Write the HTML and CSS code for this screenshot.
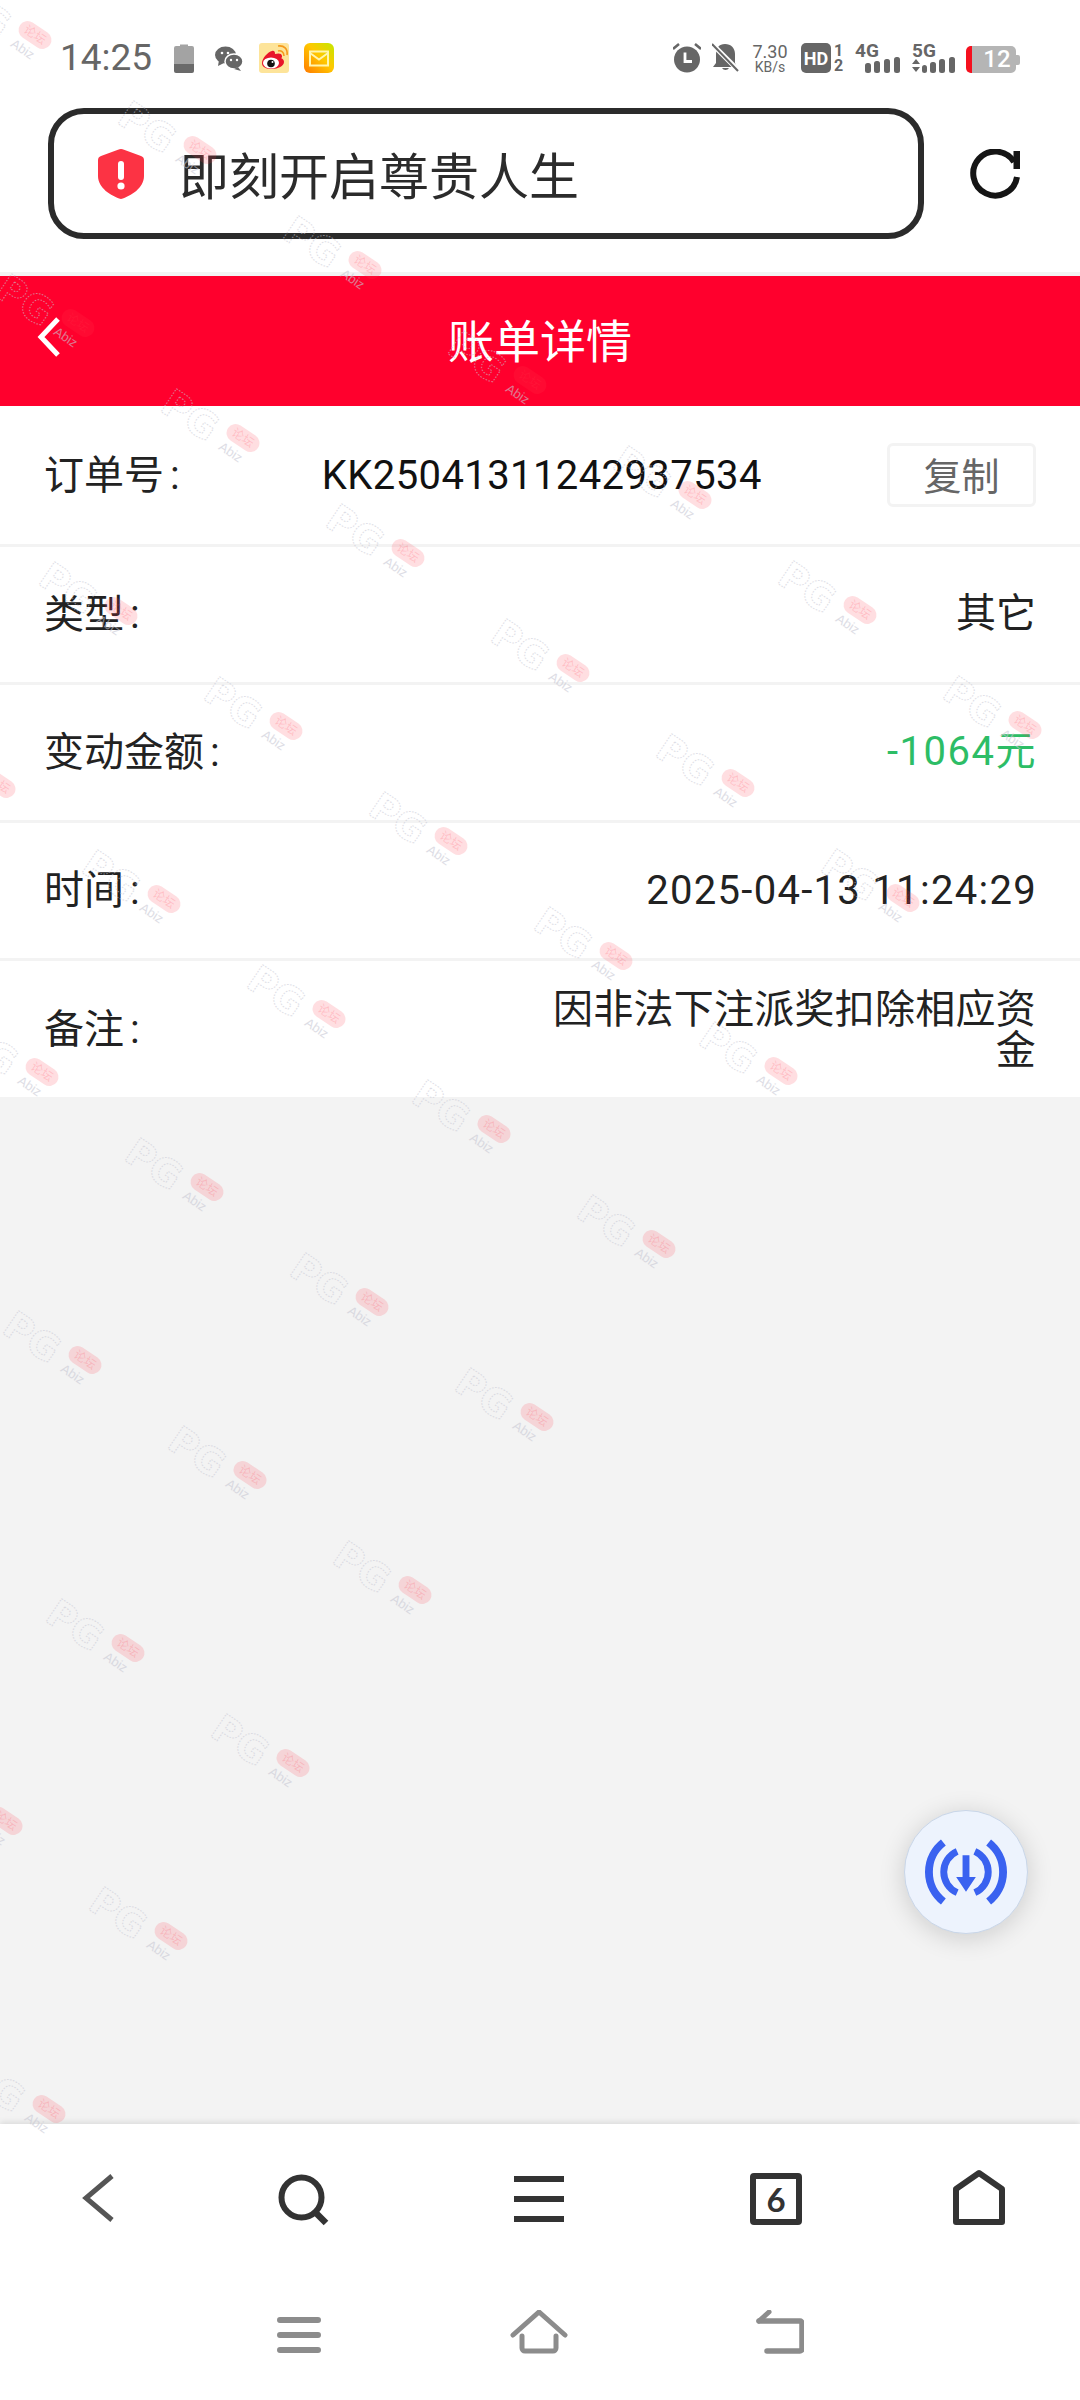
FILE: index.html
```html
<!DOCTYPE html>
<html lang="zh-CN">
<head>
    <meta charset="UTF-8">
    <meta name="viewport" content="width=device-width, initial-scale=1.0">
    <title>账单详情</title>
    <link rel="stylesheet" href="styles.css">
</head>
<body>
    <div class="page">
        <div class="status-bar">
            <div class="status-left">
                <span class="status-time">14:25</span>
                <svg class="ic-batt-small" viewBox="0 0 20 30"><path d="M6 1.500h8v1.500h4a2 2 0 0 1 2 2V21H0V5a2 2 0 0 1 2-2h4z" fill="#a3a3a3"/><path d="M0 21h20v7a2 2 0 0 1-2 2H2a2 2 0 0 1-2-2z" fill="#6a6a6a"/></svg>
                <svg class="ic-wechat" viewBox="0 0 28 25"><ellipse cx="10.500" cy="9" rx="10.500" ry="8.500" fill="#666"/><path d="M4 14l-1 6 6-3z" fill="#666"/><ellipse cx="19" cy="15.500" rx="9" ry="7.500" fill="#666" stroke="#fff" stroke-width="1.500"/><path d="M23 21l3 4-7-2z" fill="#666"/><circle cx="7" cy="7" r="1.300" fill="#fff"/><circle cx="13" cy="7" r="1.300" fill="#fff"/><circle cx="16" cy="14" r="1.200" fill="#fff"/><circle cx="22" cy="14" r="1.200" fill="#fff"/></svg>
                <svg class="ic-app" viewBox="0 0 30 30"><rect width="30" height="30" rx="3" fill="#fde49a"/><path d="M3 20c0-5 6-11 10-12 3-1 3 2 3 3 3-1 7-1 7 2 0 1 0 2-1 2 2 1 3 2 3 4 0 4-6 7-12 7S3 24 3 20z" fill="#e8142a"/><ellipse cx="12" cy="20" rx="8" ry="5.500" fill="#fff"/><circle cx="12" cy="20.500" r="3.800" fill="#111"/><circle cx="13.500" cy="19" r="1" fill="#fff"/><path d="M19 8c3-1 6 1 6 5M19 3c6-1 10 3 9 9" fill="none" stroke="#f59a1c" stroke-width="1.600"/></svg>
                <svg class="ic-app" viewBox="0 0 30 30"><defs><linearGradient id="mailBg" x1="1" y1="0" x2="0" y2="1"><stop offset="0" stop-color="#c3e800"/><stop offset=".45" stop-color="#ffc800"/><stop offset="1" stop-color="#ff7a00"/></linearGradient></defs><rect width="30" height="30" rx="6" fill="url(#mailBg)"/><rect x="6" y="8.500" width="18" height="14" fill="none" stroke="#fff6b0" stroke-width="2"/><path d="M6 10l9 6.500 9-6.500" fill="none" stroke="#fff6b0" stroke-width="2"/></svg>
            </div>
            <div class="status-right">
                <svg class="ic-alarm" viewBox="0 0 28 30"><circle cx="14" cy="16.500" r="13" fill="#666"/><path d="M0 6l6-5M28 6l-6-5" stroke="#666" stroke-width="2.500"/><path d="M12 9.500v9h7" fill="none" stroke="#fff" stroke-width="2.800"/></svg>
                <svg class="ic-bell" viewBox="0 0 27 30"><path d="M13 1c-6 0-9 4-9 10v9l-3 4h24l-2-4V11c0-6-4-10-10-10z" fill="#666"/><path d="M10 25a4 4 0 0 0 7 0z" fill="#666"/><path d="M-1 0l27 27" stroke="#fff" stroke-width="5"/><path d="M0 1l26 27" stroke="#666" stroke-width="2"/></svg>
                <div class="net-speed"><span class="net-val">7.30</span><span class="net-unit">KB/s</span></div>
                <div class="ic-stack">
                    <svg class="ic-hd" viewBox="0 0 30 30"><rect width="30" height="30" rx="5" fill="#666"/><text class="svg-bold" x="15" y="21.500" font-size="18" fill="#fff" text-anchor="middle">HD</text></svg>
                    <div class="sim-nums"><span>1</span><span>2</span></div>
                </div>
                <div class="ic-net ic-net4">
                    <span class="net-name">4G</span>
                    <svg class="net-bars" viewBox="0 0 44 16"><rect x="9" y="6" width="6" height="10" rx="2.500" fill="#666"/><rect x="18" y="4" width="6" height="12" rx="2.500" fill="#666"/><rect x="28" y="2" width="6" height="14" rx="2.500" fill="#666"/><rect x="38" y="0" width="6" height="16" rx="2.500" fill="#666"/></svg>
                </div>
                <div class="ic-net ic-net5">
                    <span class="net-name">5G</span>
                    <svg class="net-bars" viewBox="0 0 43 16"><path d="M0 7l4-5 4 5zM0 10h8l-4 5z" fill="#666"/><rect x="10" y="8" width="5" height="8" rx="2.500" fill="#666"/><rect x="18" y="5" width="6" height="11" rx="2.500" fill="#666"/><rect x="27" y="2" width="6" height="14" rx="2.500" fill="#666"/><rect x="37" y="0" width="6" height="16" rx="2.500" fill="#666"/></svg>
                </div>
                <div class="ic-batt">
                    <span class="batt-level">12</span>
                    <span class="batt-tip"></span>
                </div>
            </div>
        </div>

        <div class="url-row">
            <div class="url-box">
                <svg class="ic-shield" viewBox="0 0 46 50"><path d="M23 0c1 0 2 .3 3 .7l17 6.300c2 .8 3 2 3 4V27c0 12-13 20-23 23C13 47 0 39 0 27V11c0-2 1-3.200 3-4L20 .7c1-.4 2-.7 3-.7z" fill="#fc3344"/><rect x="20" y="12" width="6" height="19" rx="3" fill="#fff"/><circle cx="23" cy="37" r="3.600" fill="#fff"/></svg>
                <span class="url-text">即刻开启尊贵人生</span>
            </div>
            <svg class="ic-refresh" viewBox="0 0 50 50"><path d="M47 28A22 22 0 1 1 44 13" fill="none" stroke="#151515" stroke-width="6"/><rect x="43.500" y="2" width="6.500" height="18" fill="#151515"/></svg>
        </div>

        <header class="title-bar">
            <svg class="ic-title-back" viewBox="0 0 24 40"><path d="M21 2L4 20l17 18" fill="none" stroke="#fff" stroke-width="5"/></svg>
            <h1 class="title-text">账单详情</h1>
        </header>

        <section class="detail-list">
            <div class="detail-row order-row">
                <span class="detail-label">订单号 :</span>
                <span class="detail-value order-no">KK25041311242937534</span>
                <button class="copy-btn">复制</button>
            </div>
            <div class="detail-row">
                <span class="detail-label">类型 :</span>
                <span class="detail-value raised">其它</span>
            </div>
            <div class="detail-row">
                <span class="detail-label">变动金额 :</span>
                <span class="detail-value raised amount">-1064元</span>
            </div>
            <div class="detail-row">
                <span class="detail-label">时间 :</span>
                <span class="detail-value date">2025-04-13 11:24:29</span>
            </div>
            <div class="detail-row">
                <span class="detail-label">备注 :</span>
                <span class="detail-value remark">因非法下注派奖扣除相应资金</span>
            </div>
        </section>

        <div class="page-fill"></div>

        <nav class="browser-nav">
            <svg class="nav-ic nav-back" viewBox="0 0 60 60"><path d="M43 8L17 30l26 22" fill="none" stroke="#555" stroke-width="5"/></svg>
            <svg class="nav-ic nav-search" viewBox="0 0 60 60"><circle cx="28.500" cy="29.500" r="20" fill="none" stroke="#333" stroke-width="6"/><path d="M42 44l11 11" stroke="#333" stroke-width="6.500"/></svg>
            <svg class="nav-ic nav-menu" viewBox="0 0 60 60"><path d="M5 11h50M5 31h50M5 51h50" stroke="#333" stroke-width="6"/></svg>
            <div class="tab-count">6</div>
            <svg class="nav-ic" viewBox="0 0 60 60"><path d="M30 5L7 21v33h46V21z" fill="none" stroke="#333" stroke-width="6" stroke-linejoin="round"/></svg>
        </nav>

        <nav class="system-nav">
            <svg class="sys-ic sys-menu" viewBox="0 0 44 36"><path d="M3 3h38M3 18h38M3 33h38" stroke="#8c8c8c" stroke-width="6" stroke-linecap="round"/></svg>
            <svg class="sys-ic sys-home" viewBox="0 0 58 44"><path d="M3 25L29 2l26 23" fill="none" stroke="#8c8c8c" stroke-width="5" stroke-linecap="round"/><path d="M12 26v12a3 3 0 0 0 3 3h28a3 3 0 0 0 3-3V26" fill="none" stroke="#8c8c8c" stroke-width="5" stroke-linecap="round"/></svg>
            <svg class="sys-ic sys-back" viewBox="0 0 48 44"><path d="M11 41h33a2 2 0 0 0 2-2V13a2 2 0 0 0-2-2H3" fill="none" stroke="#8c8c8c" stroke-width="5.500" stroke-linecap="round"/><path d="M3 11l10-9" stroke="#8c8c8c" stroke-width="5" stroke-linecap="round"/></svg>
        </nav>

        <div class="float-btn">
            <svg class="ic-float" viewBox="0 0 124 124">
                <path d="M39 32A38 38 0 0 0 39 92M85 32A38 38 0 0 1 85 92" fill="none" stroke="#3a62f0" stroke-width="8"/>
                <path d="M53 41A23 23 0 0 0 53 83M71 41A23 23 0 0 1 71 83" fill="none" stroke="#3a62f0" stroke-width="7"/>
                <path d="M58.500 45h7v22h6.500L62 82 52 67h6.500z" fill="#3a62f0"/>
            </svg>
        </div>

        <!-- forum watermark laid over the whole screen -->
        <svg class="watermark" viewBox="0 0 1080 2400">
            <defs>
                <g id="wm" transform="rotate(34)">
                    <text class="wm-letters" x="-86" y="24">PG</text>
                    <rect x="-18" y="-9" width="36" height="18" rx="9" fill="#ff3b50" fill-opacity=".17"/>
                    <text class="wm-tag" x="0" y="4">论坛</text>
                    <text class="wm-small" x="-15" y="23">Abiz</text>
                </g>
            </defs>
            <use href="#wm" x="35" y="35"/><use href="#wm" x="200" y="150"/><use href="#wm" x="365" y="265"/><use href="#wm" x="530" y="380"/><use href="#wm" x="695" y="495"/><use href="#wm" x="860" y="610"/><use href="#wm" x="1025" y="725"/>
            <use href="#wm" x="78" y="323"/><use href="#wm" x="243" y="438"/><use href="#wm" x="408" y="553"/><use href="#wm" x="573" y="668"/><use href="#wm" x="738" y="783"/><use href="#wm" x="903" y="898"/>
            <use href="#wm" x="121" y="611"/><use href="#wm" x="286" y="726"/><use href="#wm" x="451" y="841"/><use href="#wm" x="616" y="956"/><use href="#wm" x="781" y="1071"/>
            <use href="#wm" x="-1" y="784"/><use href="#wm" x="164" y="899"/><use href="#wm" x="329" y="1014"/><use href="#wm" x="494" y="1129"/><use href="#wm" x="659" y="1244"/>
            <use href="#wm" x="42" y="1072"/><use href="#wm" x="207" y="1187"/><use href="#wm" x="372" y="1302"/><use href="#wm" x="537" y="1417"/>
            <use href="#wm" x="85" y="1360"/><use href="#wm" x="250" y="1475"/><use href="#wm" x="415" y="1590"/>
            <use href="#wm" x="128" y="1648"/><use href="#wm" x="293" y="1763"/>
            <use href="#wm" x="6" y="1821"/><use href="#wm" x="171" y="1936"/>
            <use href="#wm" x="49" y="2109"/>
        </svg>
    </div>
</body>
</html>
```

FILE: styles.css
```css
/* Reset and Base Styles */
* {
    margin: 0;
    padding: 0;
    box-sizing: border-box;
    font-family: Roboto, 'Noto Sans CJK SC', sans-serif;
}

body {
    background-color: #fff;
    color: #222;
}

.page {
    position: relative;
    width: 1080px;
    height: 2400px;
    display: flex;
    flex-direction: column;
    overflow: hidden;
    background-color: #f3f3f3;
}

/* Status Bar */
.status-bar {
    height: 108px;
    padding: 43px 60px 0;
    display: flex;
    justify-content: space-between;
    align-items: flex-start;
    background-color: #fff;
}

.status-left,
.status-right {
    display: flex;
    align-items: flex-start;
}

.status-right {
    gap: 11px;
}

.status-time {
    font-size: 37px;
    line-height: 30px;
    color: #666;
    width: 114px;
}

.svg-bold {
    font-weight: 700;
}

.ic-batt-small {
    width: 20px;
    height: 30px;
    margin-right: 21px;
}

.ic-wechat {
    width: 28px;
    height: 25px;
    margin-top: 3px;
    margin-right: 16px;
}

.ic-app {
    width: 30px;
    height: 30px;
    margin-right: 15px;
}

.ic-alarm {
    width: 28px;
    height: 30px;
}

.ic-bell {
    width: 27px;
    height: 30px;
}

.net-speed {
    width: 40px;
    height: 30px;
    display: flex;
    flex-direction: column;
    align-items: center;
    color: #666;
}

.net-val {
    font-size: 18px;
    line-height: 17px;
}

.net-unit {
    font-size: 14px;
    line-height: 14px;
}

.ic-stack {
    width: 43px;
    height: 30px;
    display: flex;
    justify-content: space-between;
}

.ic-hd {
    width: 30px;
    height: 30px;
}

.sim-nums {
    width: 11px;
    display: flex;
    flex-direction: column;
    align-items: center;
    font-size: 16px;
    line-height: 15px;
    font-weight: 700;
    color: #666;
}

.ic-net {
    position: relative;
    height: 30px;
}

.ic-net4 {
    width: 46px;
}

.ic-net5 {
    width: 43px;
}

.net-name {
    display: block;
    font-size: 19px;
    line-height: 15px;
    font-weight: 700;
    color: #666;
}

.net-bars {
    position: absolute;
    left: 0;
    bottom: 0;
    width: 100%;
    height: 16px;
}

.ic-batt {
    position: relative;
    width: 50px;
    height: 27px;
    margin-top: 3px;
    margin-right: 4px;
    display: flex;
    align-items: center;
    justify-content: center;
    padding-left: 6px;
    border-radius: 5px;
    border-left: 6px solid #f5101e;
    background-color: #b5b5b5;
}

.batt-level {
    font-size: 24px;
    line-height: 27px;
    font-weight: 500;
    color: #fff;
}

.batt-tip {
    position: absolute;
    right: -4px;
    top: 9px;
    width: 4px;
    height: 10px;
    border-radius: 0 2px 2px 0;
    background-color: #b5b5b5;
}

/* URL Row */
.url-row {
    height: 168px;
    padding: 0 60px 0 48px;
    display: flex;
    justify-content: space-between;
    align-items: flex-start;
    background-color: #fff;
    border-bottom: 4px solid #f3f3f3;
}

.url-box {
    width: 876px;
    height: 131px;
    padding-left: 44px;
    display: flex;
    align-items: center;
    gap: 35px;
    border: 6px solid #2b2b2b;
    border-radius: 36px;
}

.ic-shield {
    width: 46px;
    height: 50px;
}

.url-text {
    font-size: 50px;
    color: #2b2b2b;
    padding-bottom: 2px;
}

.ic-refresh {
    width: 50px;
    height: 50px;
    margin-top: 41px;
}

/* Title Bar */
.title-bar {
    position: relative;
    height: 130px;
    padding-bottom: 7px;
    display: flex;
    align-items: center;
    justify-content: center;
    background-color: #ff002d;
}

.ic-title-back {
    position: absolute;
    left: 37px;
    top: 41px;
    width: 24px;
    height: 40px;
}

.title-text {
    font-size: 46px;
    font-weight: 400;
    color: #fff;
}

/* Detail Rows */
.detail-list {
    background-color: #fff;
}

.detail-row {
    height: 138px;
    padding: 0 44px;
    display: flex;
    justify-content: space-between;
    align-items: center;
    border-bottom: 3px solid #f3f3f3;
    font-size: 40px;
}

.order-row {
    height: 141px;
}

.detail-row:last-child {
    height: 136px;
    border-bottom: none;
}

.detail-label {
    color: #222;
    word-spacing: -4px;
    padding-bottom: 7px;
}

.detail-value {
    color: #222;
    text-align: right;
}

.raised {
    padding-bottom: 9px;
}

.order-no {
    color: #111;
    letter-spacing: 0.4px;
    margin-left: 17px;
}

.date {
    letter-spacing: 1.3px;
    margin-right: -1px;
}

.amount {
    color: #2dbd66;
    letter-spacing: 1.5px;
    margin-right: -1px;
}

.remark {
    width: 490px;
    line-height: 41px;
    letter-spacing: 0.25px;
    padding-top: 2px;
}

.copy-btn {
    width: 149px;
    height: 64px;
    padding-bottom: 4px;
    background-color: #fff;
    border: 3px solid #f3f3f3;
    border-radius: 6px;
    font-size: 38px;
    color: #666;
}

.page-fill {
    flex: 1;
}

/* Browser Bottom Bar */
.browser-nav {
    height: 152px;
    padding: 44px 0 0 69px;
    display: flex;
    align-items: flex-start;
    background-color: #fff;
    box-shadow: 0 -2px 6px rgba(0, 0, 0, 0.1);
}

.nav-ic {
    width: 60px;
    height: 60px;
}

.nav-back {
    margin-right: 144px;
}

.nav-search {
    margin-right: 176px;
}

.nav-menu {
    margin-right: 181px;
}

.tab-count {
    width: 52px;
    height: 52px;
    margin-top: 5px;
    margin-right: 147px;
    display: flex;
    align-items: center;
    justify-content: center;
    border: 6px solid #333;
    border-radius: 4px;
    font-family: Lato, sans-serif;
    font-size: 33px;
    font-weight: 700;
    color: #333;
}

/* System Navigation */
.system-nav {
    height: 124px;
    padding-top: 34px;
    display: flex;
    justify-content: center;
    align-items: flex-start;
    background-color: #fff;
}

.sys-ic {
    height: 44px;
}

.sys-menu {
    width: 44px;
    height: 36px;
    margin-top: 7px;
    margin-right: 189px;
}

.sys-home {
    width: 58px;
    margin-right: 188px;
}

.sys-back {
    width: 48px;
}

/* Floating Button */
.float-btn {
    position: absolute;
    left: 904px;
    top: 1810px;
    width: 124px;
    height: 124px;
    border-radius: 50%;
    background-color: #edf3fd;
    border: 1px solid #c9d6e8;
    box-shadow: 0 4px 26px rgba(0, 0, 0, 0.16);
}

.ic-float {
    display: block;
    width: 122px;
    height: 122px;
}

/* Watermark */
.watermark {
    position: absolute;
    left: 0;
    top: 0;
    width: 1080px;
    height: 2400px;
    pointer-events: none;
}

.wm-letters {
    font-family: 'DejaVu Sans', sans-serif;
    font-size: 38px;
    font-weight: 700;
    fill: none;
    stroke: #c8c8d4;
    stroke-width: 1;
    stroke-dasharray: 1.5 1.5;
    opacity: 0.6;
}

.wm-tag {
    font-size: 12px;
    fill: #ff3b50;
    fill-opacity: 0.2;
    text-anchor: middle;
}

.wm-small {
    font-family: 'Liberation Sans', sans-serif;
    font-size: 13px;
    fill: #c8c8d4;
    opacity: 0.6;
}
```
